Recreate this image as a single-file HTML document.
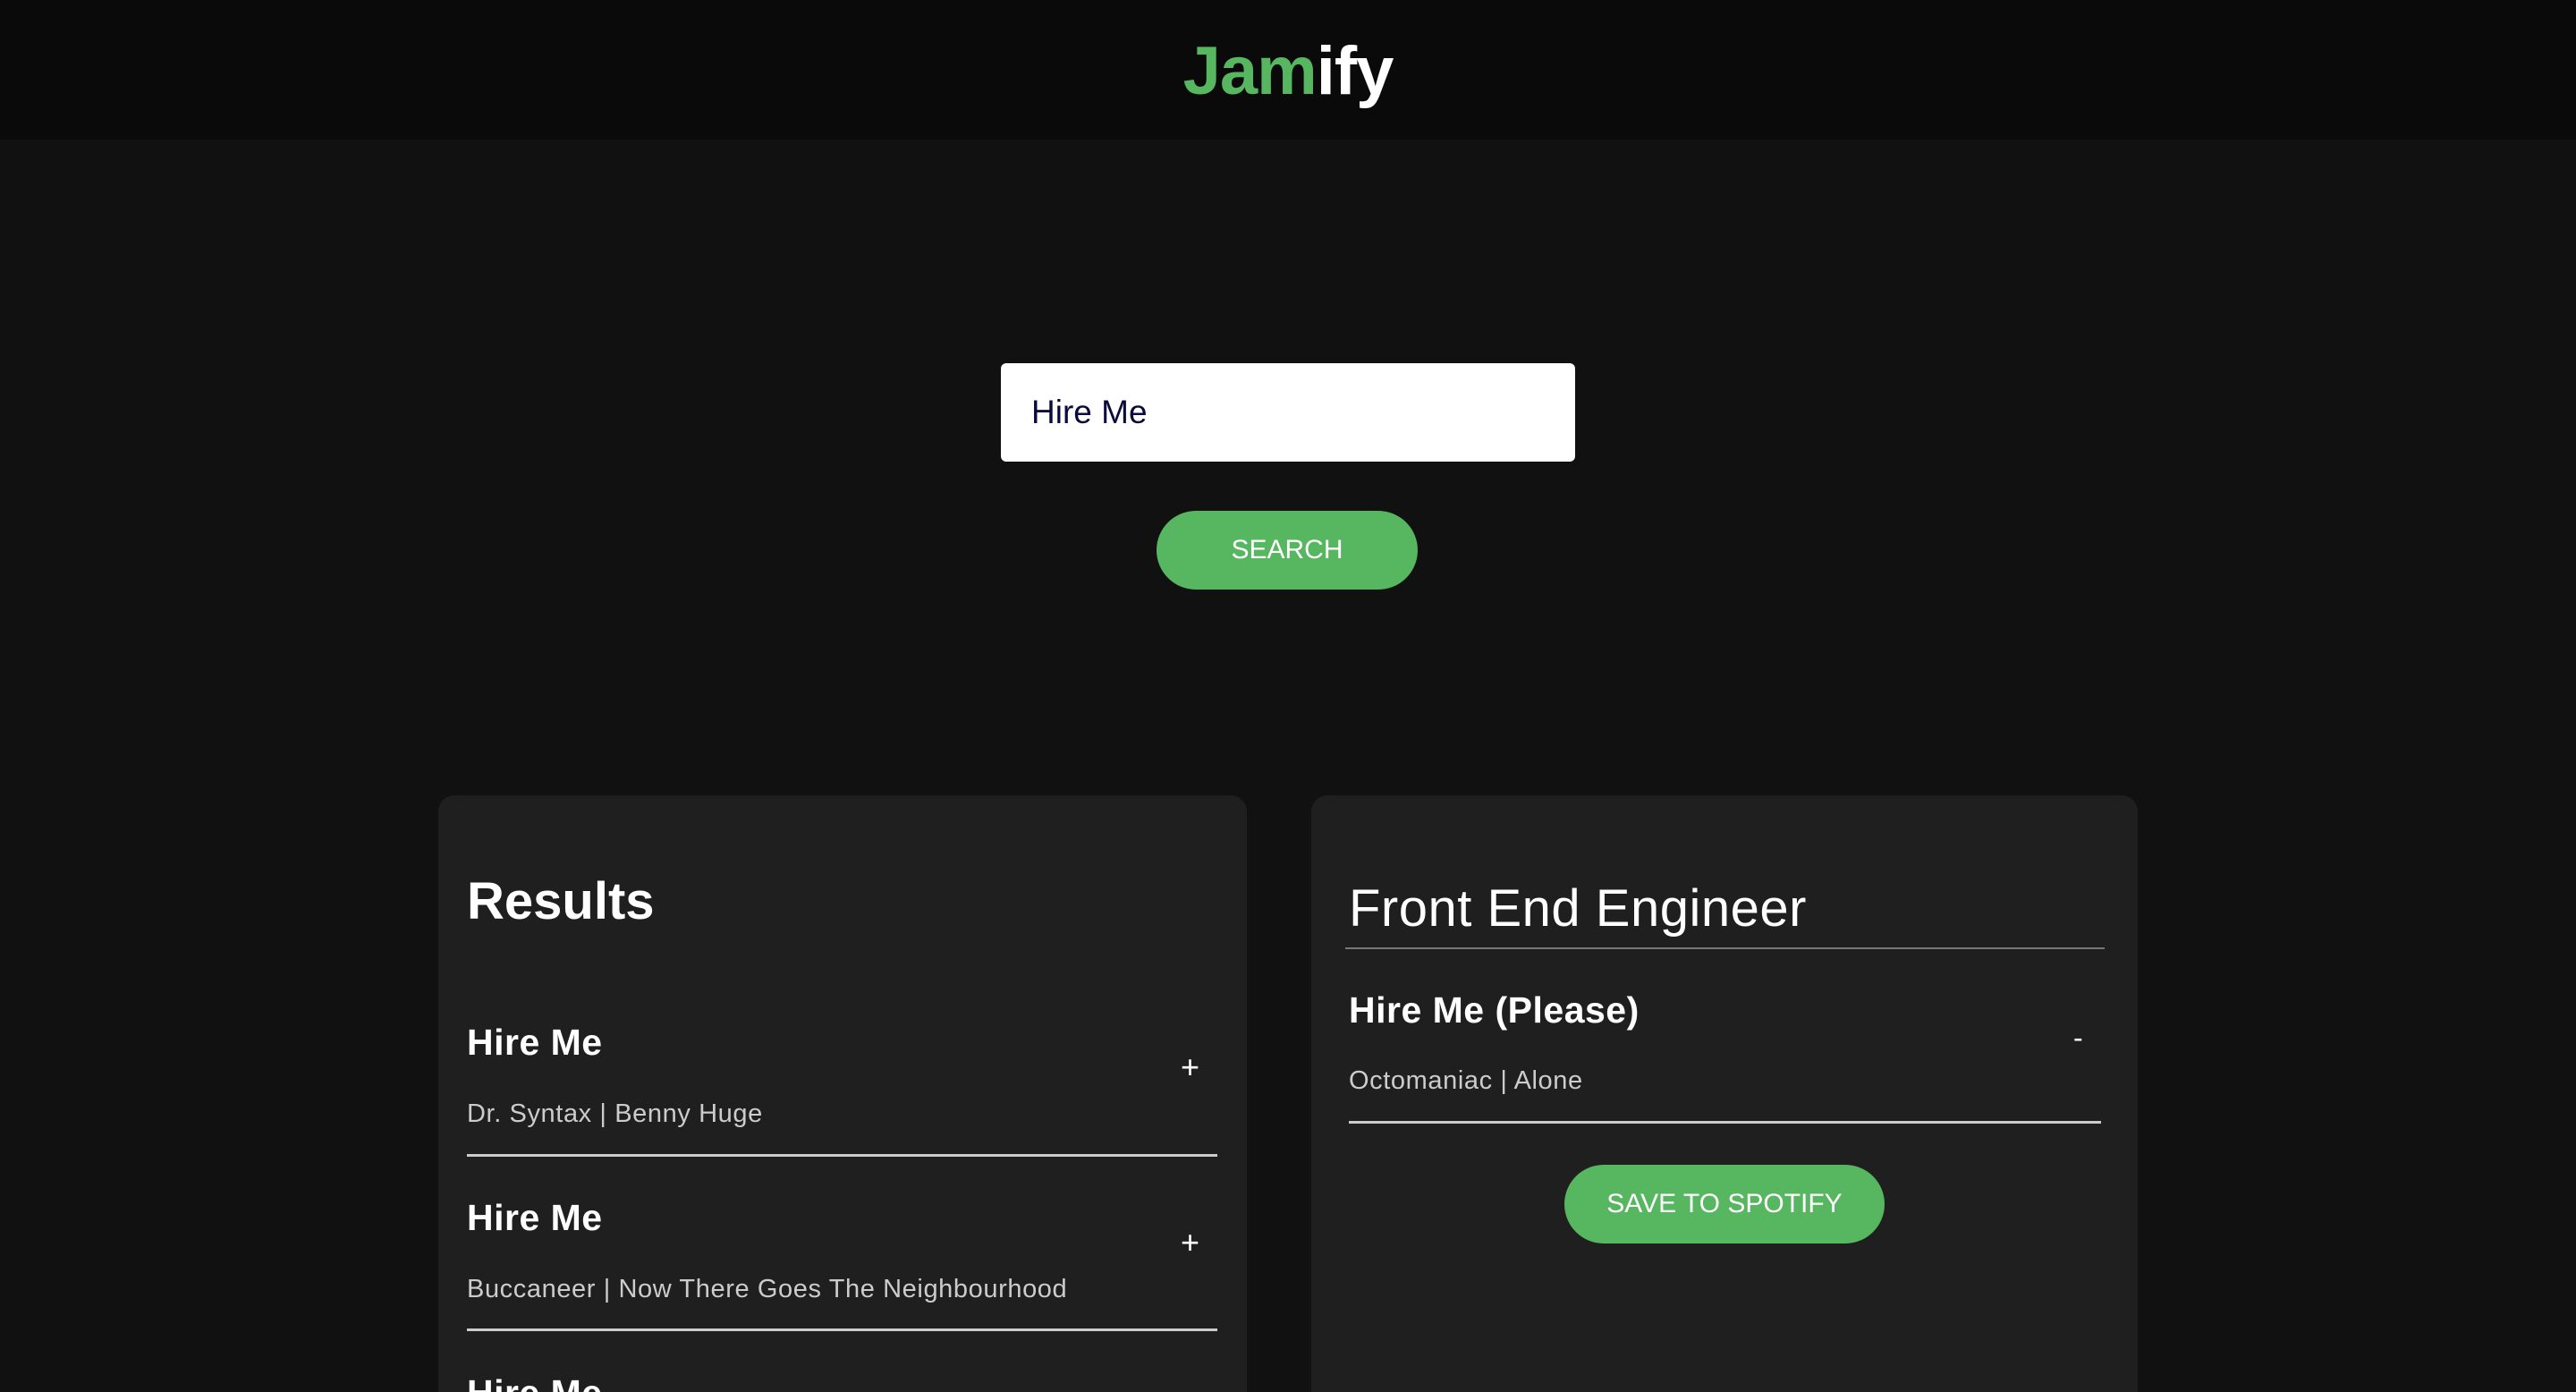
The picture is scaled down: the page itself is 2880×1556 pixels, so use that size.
<!DOCTYPE html>
<html><head><meta charset="utf-8"><style>
*{margin:0;padding:0;box-sizing:border-box}
html,body{width:2880px;height:1556px;overflow:hidden}
body{background:#111;font-family:"Liberation Sans",sans-serif;color:#fff;position:relative}
.a{position:absolute;white-space:nowrap}
#hdr{left:0;top:0;width:2880px;height:156px;background:#0a0a0a}
#logo{left:0;width:2880px;top:36px;text-align:center;font-size:76px;font-weight:bold;letter-spacing:-1px}
#logo span{color:#57b660}
#inp{left:1119px;top:406px;width:642px;height:110px;background:#fff;border-radius:6px}
#inpt{left:1153px;top:440px;font-size:37px;color:#0b0b3b}
.btn{background:#57b660;border-radius:50px;text-align:center;color:#fff;font-size:30px}
.card{background:#1f1f1f;border-radius:18px 18px 0 0;top:889px;height:667px}
.t{font-size:41px;font-weight:bold;letter-spacing:0.5px}
.ar{font-size:29px;color:#ccc;letter-spacing:0.6px}
.ln{height:3px;background:#ccc}
#clip{left:0;top:0;width:2880px;height:1556px;overflow:hidden}
</style></head><body>
<div class="a" id="clip">
<div class="a" id="hdr"></div>
<div class="a" id="logo"><span>Jam</span>ify</div>
<div class="a" id="inp"></div>
<div class="a" id="inpt">Hire Me</div>
<div class="a btn" style="left:1293px;top:571px;width:292px;height:88px;line-height:88px">SEARCH</div>

<div class="a card" style="left:490px;width:904px"></div>
<div class="a card" style="left:1466px;width:924px"></div>

<div class="a" style="left:522px;top:974px;font-size:58px;font-weight:bold">Results</div>
<div class="a t" style="left:522px;top:1142px">Hire Me</div>
<div class="a" style="left:1320px;top:1172px;font-size:36px">+</div>
<div class="a ar" style="left:522px;top:1229px">Dr. Syntax | Benny Huge</div>
<div class="a ln" style="left:522px;top:1290px;width:839px"></div>
<div class="a t" style="left:522px;top:1338px">Hire Me</div>
<div class="a" style="left:1320px;top:1368px;font-size:36px">+</div>
<div class="a ar" style="left:522px;top:1425px">Buccaneer | Now There Goes The Neighbourhood</div>
<div class="a ln" style="left:522px;top:1485px;width:839px"></div>
<div class="a t" style="left:522px;top:1534px;height:22px;overflow:hidden">Hire Me</div>

<div class="a" style="left:1508px;top:982px;font-size:58px;letter-spacing:0.5px">Front End Engineer</div>
<div class="a" style="left:1504px;top:1059px;width:849px;height:2px;background:#777"></div>
<div class="a t" style="left:1508px;top:1106px">Hire Me (Please)</div>
<div class="a" style="left:2318px;top:1142px;font-size:32px">-</div>
<div class="a ar" style="left:1508px;top:1192px">Octomaniac | Alone</div>
<div class="a ln" style="left:1508px;top:1253px;width:841px"></div>
<div class="a btn" style="left:1749px;top:1302px;width:358px;height:88px;line-height:88px">SAVE TO SPOTIFY</div>
</div>
</body></html>
